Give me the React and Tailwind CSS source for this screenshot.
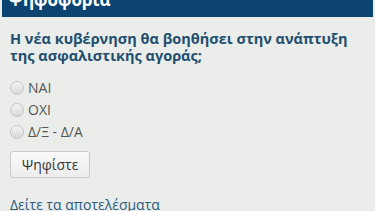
const options = ['ΝΑΙ', 'ΟΧΙ', 'Δ/Ξ - Δ/Α'];

const Radio = () => (
    <span className="w-[14px] h-[14px] rounded-full border border-[#c4c6c4] bg-gradient-to-b from-[#f4f4f4] to-[#d8d8d8] shrink-0" />
);

export default function App() {
    return (
        <div className="w-[375px] h-[211px] overflow-hidden bg-[#eaedea] px-[2px] font-['Open_Sans',sans-serif]">
            <div className="h-[17px] bg-[#0b4371] overflow-hidden">
                <h2 className="text-white font-bold text-[17px] leading-[20px] mt-[-10px] pl-[6px]">Ψηφοφορία</h2>
            </div>
            <div className="px-[8px] pt-[13px]">
                <p className="text-[#1f4e70] font-bold text-[14.5px] leading-[17px]">
                    Η νέα κυβέρνηση θα βοηθήσει στην ανάπτυξη της ασφαλιστικής αγοράς;
                </p>
                <div className="mt-[15px] flex flex-col gap-[4px]">
                    {options.map((o) => (
                        <label key={o} className="flex items-center gap-[4px] text-[14px] leading-[18px] text-[#555]">
                            <Radio />
                            {o}
                        </label>
                    ))}
                </div>
                <button className="mt-[10px] h-[27px] px-[11px] border border-[#c9c9c9] rounded-[3px] bg-gradient-to-b from-[#fafafa] to-[#ececec] text-[14px] text-[#333]">
                    Ψηφίστε
                </button>
                <a href="#" className="block mt-[17px] text-[14px] leading-[19px] text-[#2c5b7e]">
                    Δείτε τα αποτελέσματα
                </a>
            </div>
        </div>
    );
}
